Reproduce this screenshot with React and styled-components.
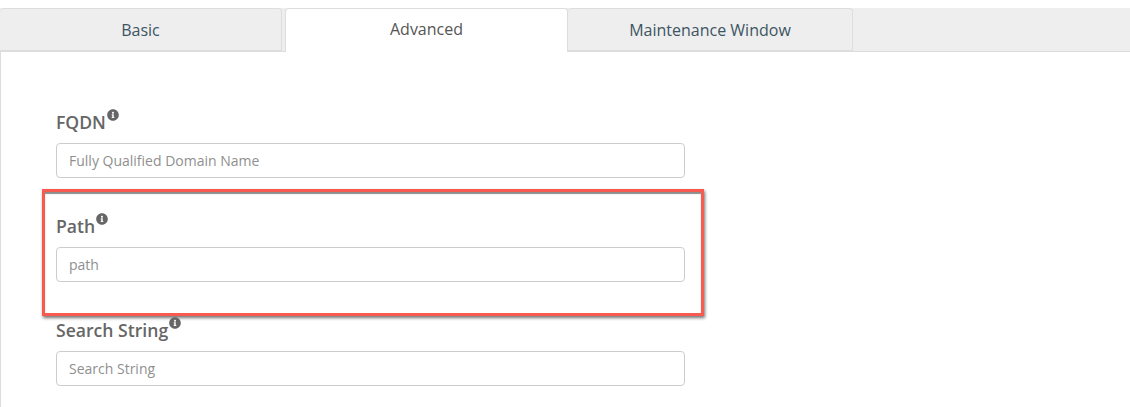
import styled, { createGlobalStyle } from "styled-components";
import { FaInfoCircle } from "react-icons/fa";

const GlobalStyle = createGlobalStyle`
  html, body {
    margin: 0;
    padding: 0;
    background: #fff;
    font-family: "Open Sans", "Liberation Sans", sans-serif;
  }
`;

const Page = styled.div`
  width: 1130px;
  height: 407px;
  padding-top: 8px;
  box-sizing: border-box;
  overflow: hidden;
`;

const TabBar = styled.div`
  display: flex;
  height: 44px;
  box-sizing: border-box;
  background: #eee;
  border-bottom: 1px solid #ddd;
`;

const Tab = styled.div`
  width: ${(props) => props.$width}px;
  margin-right: ${(props) => props.$gap || 0}px;
  height: ${(props) => (props.$active ? 44 : 43)}px;
  box-sizing: border-box;
  padding-bottom: ${(props) => (props.$active ? 3 : 0)}px;
  display: flex;
  align-items: center;
  justify-content: center;
  font-size: 16px;
  color: ${(props) => (props.$active ? "#555" : "#3d5463")};
  background: ${(props) => (props.$active ? "#fff" : "#eee")};
  border: 1px solid #ddd;
  border-bottom: ${(props) => (props.$active ? "0" : "1px solid #ddd")};
  border-left: ${(props) => (props.$noLeft ? "0" : "1px solid #ddd")};
  border-radius: 4px 4px 0 0;
`;

const Panel = styled.div`
  height: 355px;
  box-sizing: border-box;
  border-left: 1px solid #ddd;
  padding: 37px 0 0 55px;
  display: flex;
  flex-direction: column;
  gap: 15px;
`;

const Field = styled.div`
  position: relative;
  width: 629px;
  height: 89px;
  display: flex;
  flex-direction: column;
  justify-content: flex-end;
`;

const Label = styled.label`
  display: flex;
  align-items: flex-start;
  font-size: 17.6px;
  line-height: 24px;
  font-weight: 600;
  color: #666;
  margin-bottom: 9px;
`;

const InfoIcon = styled(FaInfoCircle)`
  width: 12px;
  height: 12px;
  margin: -1px 0 0 1px;
  color: #666;
`;

const Input = styled.input`
  width: 100%;
  height: 35px;
  box-sizing: border-box;
  padding: 0 12px;
  border: 1px solid #ccc;
  border-radius: 4px;
  background: #fff;
  font-family: inherit;
  font-size: 14px;
  color: #555;
  &::placeholder {
    color: #8f8f8f;
    opacity: 1;
  }
`;

const Highlight = styled.div`
  position: absolute;
  left: -14px;
  top: -4px;
  width: 662px;
  height: 127px;
  box-sizing: border-box;
  border: 3px solid #f95a4f;
  box-shadow: 1px 2px 3px rgba(0, 0, 0, 0.55), inset 0 2px 1px rgba(0, 0, 0, 0.45);
  pointer-events: none;
`;

const fields = [
  { label: "FQDN", placeholder: "Fully Qualified Domain Name" },
  { label: "Path", placeholder: "path", highlighted: true },
  { label: "Search String", placeholder: "Search String" },
];

export default function App() {
  return (
    <Page>
      <GlobalStyle />
      <TabBar>
        <Tab $width={282} $gap={3} $noLeft>Basic</Tab>
        <Tab $width={283} $active>Advanced</Tab>
        <Tab $width={285} $noLeft>Maintenance Window</Tab>
      </TabBar>
      <Panel>
        {fields.map((field) => (
          <Field key={field.label}>
            {field.highlighted && <Highlight />}
            <Label>
              {field.label}
              <InfoIcon />
            </Label>
            <Input placeholder={field.placeholder} />
          </Field>
        ))}
      </Panel>
    </Page>
  );
}
